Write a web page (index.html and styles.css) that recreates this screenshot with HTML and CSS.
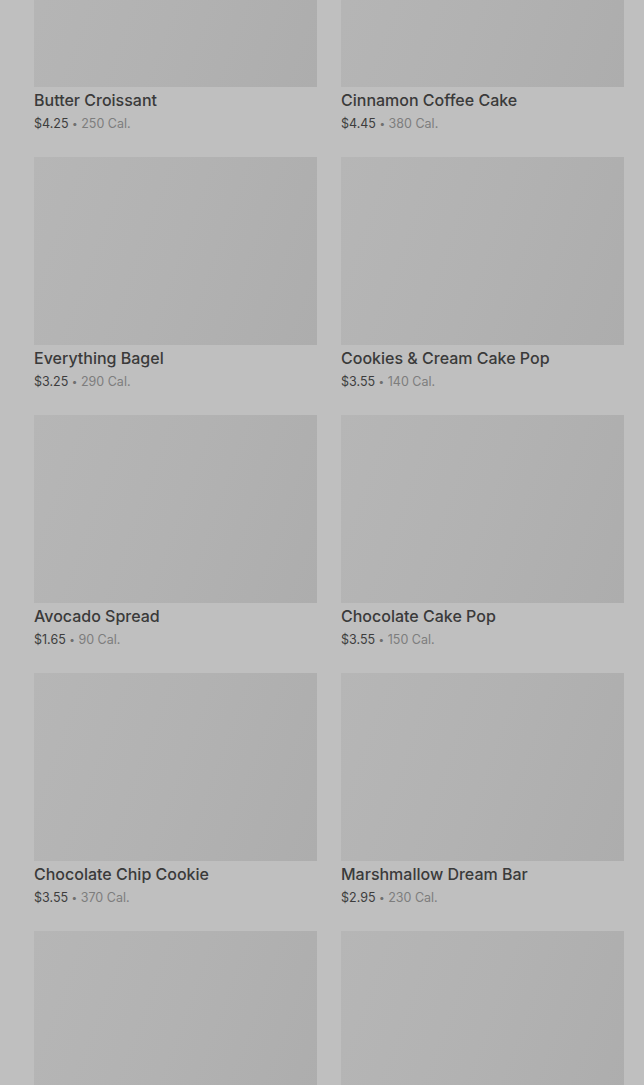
FILE: index.html
```html
<!DOCTYPE html>
<html>
<head>
<meta charset="utf-8">
<link rel="stylesheet" href="styles.css">
</head>
<body>
<div class="page">
  <div class="grid">
    <div class="card"><div class="img"></div><div class="title">Butter Croissant</div><div class="meta"><span class="price">$4.25</span> <span class="dot">•</span> <span class="cal">250 Cal.</span></div></div>
    <div class="card"><div class="img"></div><div class="title">Cinnamon Coffee Cake</div><div class="meta"><span class="price">$4.45</span> <span class="dot">•</span> <span class="cal">380 Cal.</span></div></div>
    <div class="card"><div class="img"></div><div class="title">Everything Bagel</div><div class="meta"><span class="price">$3.25</span> <span class="dot">•</span> <span class="cal">290 Cal.</span></div></div>
    <div class="card"><div class="img"></div><div class="title">Cookies &amp; Cream Cake Pop</div><div class="meta"><span class="price">$3.55</span> <span class="dot">•</span> <span class="cal">140 Cal.</span></div></div>
    <div class="card"><div class="img"></div><div class="title">Avocado Spread</div><div class="meta"><span class="price">$1.65</span> <span class="dot">•</span> <span class="cal">90 Cal.</span></div></div>
    <div class="card"><div class="img"></div><div class="title">Chocolate Cake Pop</div><div class="meta"><span class="price">$3.55</span> <span class="dot">•</span> <span class="cal">150 Cal.</span></div></div>
    <div class="card"><div class="img"></div><div class="title">Chocolate Chip Cookie</div><div class="meta"><span class="price">$3.55</span> <span class="dot">•</span> <span class="cal">370 Cal.</span></div></div>
    <div class="card"><div class="img"></div><div class="title">Marshmallow Dream Bar</div><div class="meta"><span class="price">$2.95</span> <span class="dot">•</span> <span class="cal">230 Cal.</span></div></div>
    <div class="card"><div class="img"></div></div>
    <div class="card"><div class="img"></div></div>
  </div>
</div>
</body>
</html>
```
FILE: styles.css
```css
html, body {
  margin: 0;
  padding: 0;
  background: #bfbfbf;
  overflow: hidden;
}
body {
  font-family: Inter, Roboto, "Liberation Sans", Arial, sans-serif;
}
.page {
  padding: 0 20px 0 34px;
  height: 1085px;
  overflow: hidden;
}
.grid {
  display: grid;
  grid-template-columns: 283px 283px;
  column-gap: 24px;
  row-gap: 23px;
  margin-top: -101px;
}
.img {
  height: 188px;
  background: linear-gradient(110deg, #b6b6b6 0%, #b2b2b2 50%, #adadad 100%);
}
.title {
  padding-top: 3px;
  font-size: 16px;
  line-height: 20px;
  font-weight: 500;
  color: #3a3a3a;
}
.meta {
  margin-top: 3px;
  font-size: 12.5px;
  line-height: 20px;
  color: #777;
}
.price {
  color: #3d3d3d;
}
.dot {
  font-size: 10px;
  vertical-align: 1px;
  color: #6f6f6f;
}
.cal {
  color: #7d7d7d;
}
```
